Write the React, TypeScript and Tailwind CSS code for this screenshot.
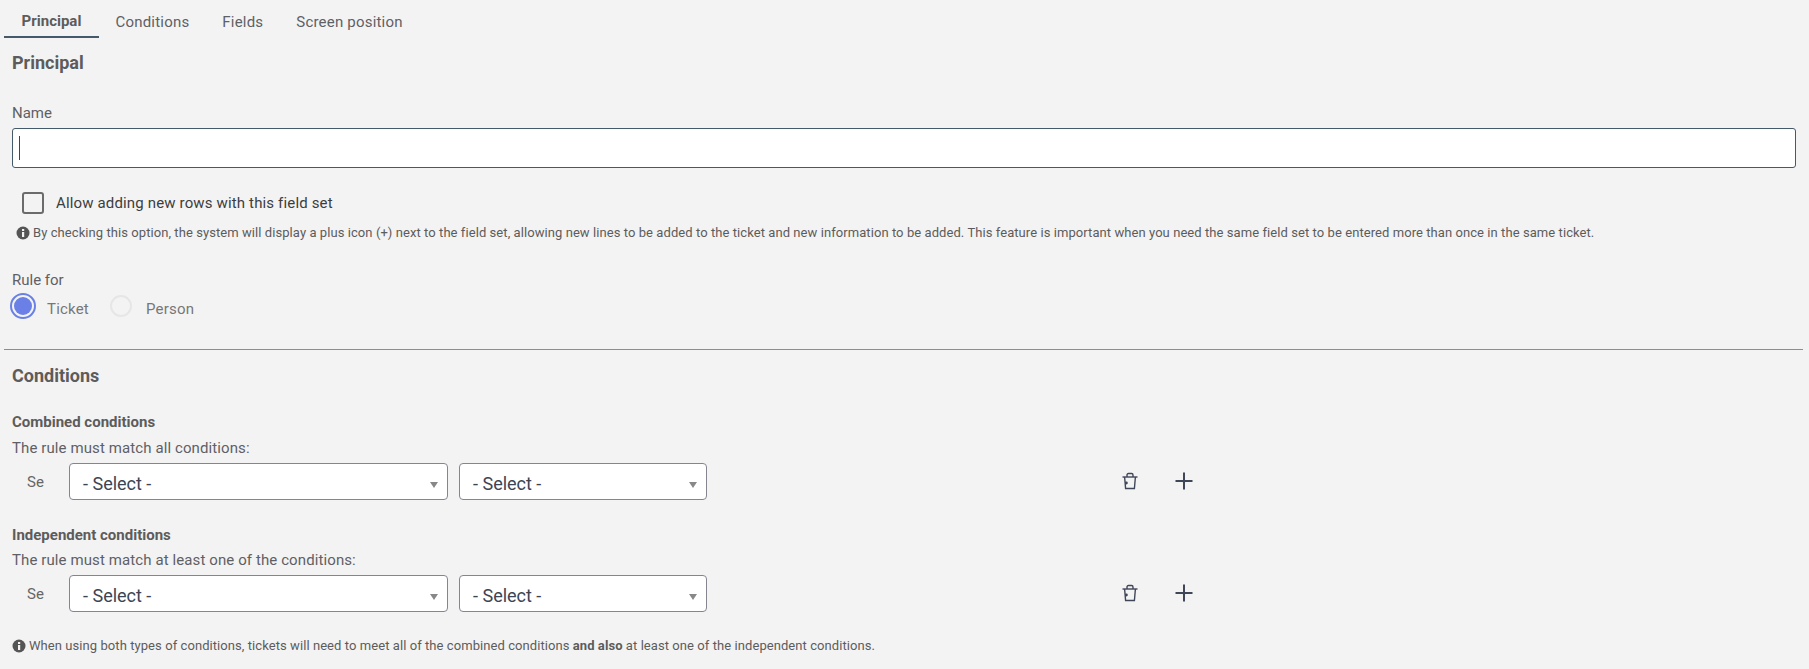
const tabs = ["Principal", "Conditions", "Fields", "Screen position"];

function Info() {
  return (
    <svg viewBox="0 0 14 14" className="w-[14px] h-[14px] shrink-0">
      <circle cx="7" cy="7" r="6.5" fill="#555" />
      <rect x="6" y="6" width="2.2" height="5" fill="#f3f3f3" />
      <rect x="6" y="3" width="2.2" height="2" fill="#f3f3f3" />
    </svg>
  );
}

function Trash() {
  return (
    <svg viewBox="0 0 18 18" fill="none" stroke="#3f4658" strokeWidth="1.4" className="w-[18px] h-[18px]">
      <path d="M1.5 5h15" />
      <path d="M6 5V3C6 2 6.6 1.5 7.4 1.5h3.2C11.4 1.5 12 2 12 3v2" />
      <path d="M3.6 5l1 11.5h8.8L14.4 5" />
      <circle cx="5.4" cy="11" r="1.4" fill="#3f4658" stroke="none" />
    </svg>
  );
}

function Plus() {
  return (
    <svg viewBox="0 0 18 18" fill="none" stroke="#3f4658" strokeWidth="2" className="w-[18px] h-[18px]">
      <path d="M9 .5v17M.5 9h17" />
      <circle cx="9" cy="9" r="1.6" fill="#3f4658" stroke="none" />
    </svg>
  );
}

function Select({ width }: { width: string }) {
  return (
    <div className={`relative h-[37px] bg-white border border-[#85858f] rounded-[4px] flex items-center pl-[13px] pt-[4px] text-[18px] text-[#3c4454] ${width}`}>
      - Select -
      <span className="absolute right-[9px] top-[18px] w-0 h-0 border-x-[4px] border-x-transparent border-t-[6px] border-t-[#888]" />
    </div>
  );
}

function ConditionRow() {
  return (
    <div className="flex items-center mt-[5px] h-[37px]">
      <span className="w-[57px] pl-[15px] pt-[2px] text-[15px] text-[#666]">Se</span>
      <Select width="w-[379px]" />
      <div className="w-[11px]" />
      <Select width="w-[248px]" />
      <div className="ml-[414px] flex items-center gap-[36px]">
        <Trash />
        <Plus />
      </div>
    </div>
  );
}

export default function App() {
  return (
    <div className="min-h-screen bg-[#f3f3f3] text-[#5c5c5c] overflow-hidden" style={{ fontFamily: "Roboto, sans-serif" }}>
      <div className="flex h-[38px] pl-[4px]">
        {tabs.map((t, i) => (
          <div
            key={t}
            className={
              i === 0
                ? "w-[95px] text-center pt-[10px] text-[15px] font-bold text-[#5c5c5c] border-b-2 border-[#44596a]"
                : "px-[16.5px] pt-[11px] text-[15px] text-[#5f5f66] tracking-[0.2px]"
            }
          >
            {t}
          </div>
        ))}
      </div>

      <div className="px-[12px]">
        <h2 className="text-[18px] font-bold text-[#5c5c5c] mt-[15px] leading-[20px]">Principal</h2>
        <label className="block text-[15px] text-[#5f5f66] mt-[30px] leading-[20px]">Name</label>
        <div className="mt-[5px] h-[40px] bg-white border border-[#44596a] rounded-[3px] flex items-center pl-[6px] w-[1784px]">
          <span className="w-px h-[24px] bg-[#444]" />
        </div>

        <div className="flex items-center mt-[24px] pl-[10px]">
          <span className="w-[22px] h-[22px] border-2 border-[#6b6b6b] rounded-[3px] bg-[#f3f3f3]" />
          <span className="ml-[12px] text-[15px] text-[#3d3d3d] tracking-[0.15px]">Allow adding new rows with this field set</span>
        </div>

        <div className="flex items-center gap-[3px] mt-[8px] pl-[4px] text-[13px] tracking-[0.07px] text-[#5c5c5c] leading-[20px]">
          <Info />
          <p>
            By checking this option, the system will display a plus icon (+) next to the field set, allowing new lines to be added to the ticket and new information to be added. This feature is important when you need the same field set to be entered more than once in the same ticket.
          </p>
        </div>

        <div className="text-[15px] text-[#5f5f66] mt-[27px] leading-[20px]">Rule for</div>
        <div className="flex items-center text-[15px] tracking-[0.2px] text-[#777] h-[26px] -ml-[2px] mt-[3px]">
          <span className="w-[26px] h-[26px] rounded-full border-2 border-[#6a80e6] flex items-center justify-center">
            <span className="w-[18px] h-[18px] rounded-full bg-[#6a80e6]" />
          </span>
          <span className="ml-[11px] mt-[7px]">Ticket</span>
          <span className="ml-[21px] w-[22px] h-[22px] rounded-full border-2 border-[#e6e6e6]" />
          <span className="ml-[14px] mt-[7px]">Person</span>
        </div>
      </div>

      <div className="mx-[4px] mt-[30px] h-px bg-[#7a93a3] w-[1799px]" />

      <div className="px-[12px]">
        <h2 className="text-[18px] font-bold text-[#5c5c5c] mt-[16px] leading-[20px]">Conditions</h2>
        <h3 className="text-[15px] font-bold text-[#5c5c5c] mt-[26px] leading-[20px]">Combined conditions</h3>
        <p className="text-[15px] tracking-[0.1px] text-[#5f5f66] mt-[6px] leading-[20px]">The rule must match all conditions:</p>
        <ConditionRow />
        <h3 className="text-[15px] font-bold text-[#5c5c5c] mt-[25px] leading-[20px]">Independent conditions</h3>
        <p className="text-[15px] tracking-[0.1px] text-[#5f5f66] mt-[5px] leading-[20px]">The rule must match at least one of the conditions:</p>
        <ConditionRow />
        <div className="flex items-center gap-[3px] mt-[24px] text-[13px] tracking-[0.07px] text-[#5c5c5c] leading-[20px]">
          <Info />
          <p>
            When using both types of conditions, tickets will need to meet all of the combined conditions <b>and also</b> at least one of the independent conditions.
          </p>
        </div>
      </div>
    </div>
  );
}
